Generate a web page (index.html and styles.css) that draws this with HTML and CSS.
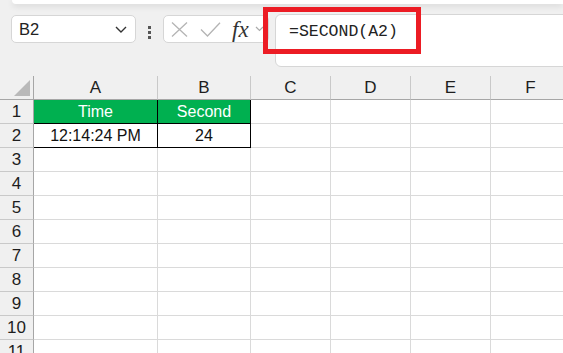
FILE: index.html
```html
<!DOCTYPE html>
<html lang="en">
<head>
  <meta charset="UTF-8">
  <title>SECOND function</title>
  <link rel="stylesheet" href="styles.css">
</head>
<body>
  <div class="ribbon-edge"></div>

  <div class="toolbar">
    <div class="name-box">
      <span>B2</span>
      <svg class="chevron" width="12" height="7" viewBox="0 0 12 7"><path d="M1 1l5 5 5-5" fill="none" stroke="#333" stroke-width="1.4"/></svg>
    </div>
    <div class="dots"><i></i><i></i><i></i></div>
    <div class="fx-box">
      <svg width="17" height="15" viewBox="0 0 17 15"><path d="M1 0.5l15 14M16 0.5l-15 14" stroke="#b4b4b4" stroke-width="1.3" fill="none"/></svg>
      <svg width="21" height="15" viewBox="0 0 21 15"><path d="M1 7.5l6.5 6.5L20 0.8" stroke="#b4b4b4" stroke-width="1.3" fill="none"/></svg>
      <span class="fx">fx</span>
      <svg width="9" height="6" viewBox="0 0 9 6"><path d="M1 1l3.5 3.5L8 1" fill="none" stroke="#aaa" stroke-width="1.2"/></svg>
    </div>
    <div class="formula-bar">=SECOND(A2)</div>
    <div class="highlight"></div>
  </div>

  <div class="sheet">
    <div class="corner"><span class="tri"></span></div>
    <div class="col-head">A</div>
    <div class="col-head">B</div>
    <div class="col-head">C</div>
    <div class="col-head">D</div>
    <div class="col-head">E</div>
    <div class="col-head">F</div>

    <div class="row-head">1</div>
    <div class="cell head-cell">Time</div>
    <div class="cell head-cell">Second</div>
    <div class="cell"></div><div class="cell"></div><div class="cell"></div><div class="cell"></div>

    <div class="row-head">2</div>
    <div class="cell data">12:14:24 PM</div>
    <div class="cell data">24</div>
    <div class="cell"></div><div class="cell"></div><div class="cell"></div><div class="cell"></div>

    <div class="row-head">3</div><div class="cell"></div><div class="cell"></div><div class="cell"></div><div class="cell"></div><div class="cell"></div><div class="cell"></div>
    <div class="row-head">4</div><div class="cell"></div><div class="cell"></div><div class="cell"></div><div class="cell"></div><div class="cell"></div><div class="cell"></div>
    <div class="row-head">5</div><div class="cell"></div><div class="cell"></div><div class="cell"></div><div class="cell"></div><div class="cell"></div><div class="cell"></div>
    <div class="row-head">6</div><div class="cell"></div><div class="cell"></div><div class="cell"></div><div class="cell"></div><div class="cell"></div><div class="cell"></div>
    <div class="row-head">7</div><div class="cell"></div><div class="cell"></div><div class="cell"></div><div class="cell"></div><div class="cell"></div><div class="cell"></div>
    <div class="row-head">8</div><div class="cell"></div><div class="cell"></div><div class="cell"></div><div class="cell"></div><div class="cell"></div><div class="cell"></div>
    <div class="row-head">9</div><div class="cell"></div><div class="cell"></div><div class="cell"></div><div class="cell"></div><div class="cell"></div><div class="cell"></div>
    <div class="row-head">10</div><div class="cell"></div><div class="cell"></div><div class="cell"></div><div class="cell"></div><div class="cell"></div><div class="cell"></div>
    <div class="row-head">11</div><div class="cell"></div><div class="cell"></div><div class="cell"></div><div class="cell"></div><div class="cell"></div><div class="cell"></div>
  </div>
</body>
</html>
```

FILE: styles.css
```css
body {
  margin: 0;
  overflow: hidden;
  background-color: #f0f0f0;
  font-family: "Liberation Sans", Arial, sans-serif;
  color: #222;
}

.ribbon-edge {
  height: 4px;
  margin-left: 12px;
  background-color: #fff;
  border-bottom-left-radius: 8px;
  box-shadow: 0 2px 6px rgba(0, 0, 0, 0.12);
}

.toolbar {
  position: relative;
  display: flex;
  align-items: flex-start;
  margin-top: 10px;
  height: 53px;
}

.name-box {
  box-sizing: border-box;
  display: flex;
  align-items: center;
  justify-content: space-between;
  width: 125px;
  height: 28px;
  margin: 1px 0 0 11px;
  padding: 0 8px 0 7px;
  background-color: #fff;
  border: 1px solid #d6d6d6;
  border-radius: 5px;
  font-size: 16.5px;
}

.chevron {
  margin-top: 1px;
}

.dots {
  display: flex;
  flex-direction: column;
  gap: 2px;
  margin: 12px 0 0 12px;
  width: 3px;
}

.dots i {
  width: 3px;
  height: 3px;
  background-color: #555;
}

.fx-box {
  box-sizing: border-box;
  display: flex;
  align-items: center;
  width: 106px;
  height: 28px;
  margin: 1px 0 0 12px;
  padding-left: 7px;
  gap: 12px;
  background-color: #fff;
  border: 1px solid #d6d6d6;
  border-radius: 5px;
}

.fx {
  margin-left: -1px;
  margin-right: -6px;
  font-family: "Liberation Serif", "Times New Roman", serif;
  font-style: italic;
  font-size: 23px;
  color: #333;
  line-height: 1;
}

.formula-bar {
  box-sizing: border-box;
  flex: 1;
  height: 53px;
  margin-left: 6px;
  margin-right: -10px;
  padding: 7px 0 0 13px;
  background-color: #fff;
  border: 1px solid #d6d6d6;
  border-radius: 6px;
  font-family: "Liberation Mono", "Courier New", monospace;
  font-size: 16.5px;
  color: #222;
}

/* red annotation drawn over the formula bar */
.highlight {
  position: absolute;
  left: 263px;
  top: -7px;
  width: 158px;
  height: 47px;
  box-sizing: border-box;
  border: 5px solid #ec1c24;
}

.sheet {
  display: grid;
  grid-template-columns: 34px 124px 93px 80px 80px 80px 80px;
  grid-auto-rows: 24px;
  margin-top: 9px;
}

.sheet > div {
  box-sizing: border-box;
  display: flex;
  align-items: center;
  justify-content: center;
}

.corner {
  position: relative;
  border-right: 1px solid #a6a6a6;
  border-bottom: 1px solid #a6a6a6;
}

.tri {
  position: absolute;
  right: 3px;
  bottom: 3px;
  width: 0;
  height: 0;
  border-left: 16px solid transparent;
  border-bottom: 16px solid #b9b9b9;
}

.col-head {
  border-right: 1px solid #c9c9c9;
  border-bottom: 1px solid #a6a6a6;
  font-size: 17px;
  color: #1e1e1e;
}

.row-head {
  border-right: 1px solid #a6a6a6;
  border-bottom: 1px solid #c9c9c9;
  font-size: 17px;
  color: #1e1e1e;
}

.cell {
  background-color: #fff;
  border-right: 1px solid #dadada;
  border-bottom: 1px solid #dadada;
  font-size: 16px;
}

.head-cell {
  background-color: #00b050;
  color: #fff;
  border-right-color: #000;
  border-bottom-color: #000;
}

.data {
  color: #111;
  border-right-color: #000;
  border-bottom-color: #000;
}
```
